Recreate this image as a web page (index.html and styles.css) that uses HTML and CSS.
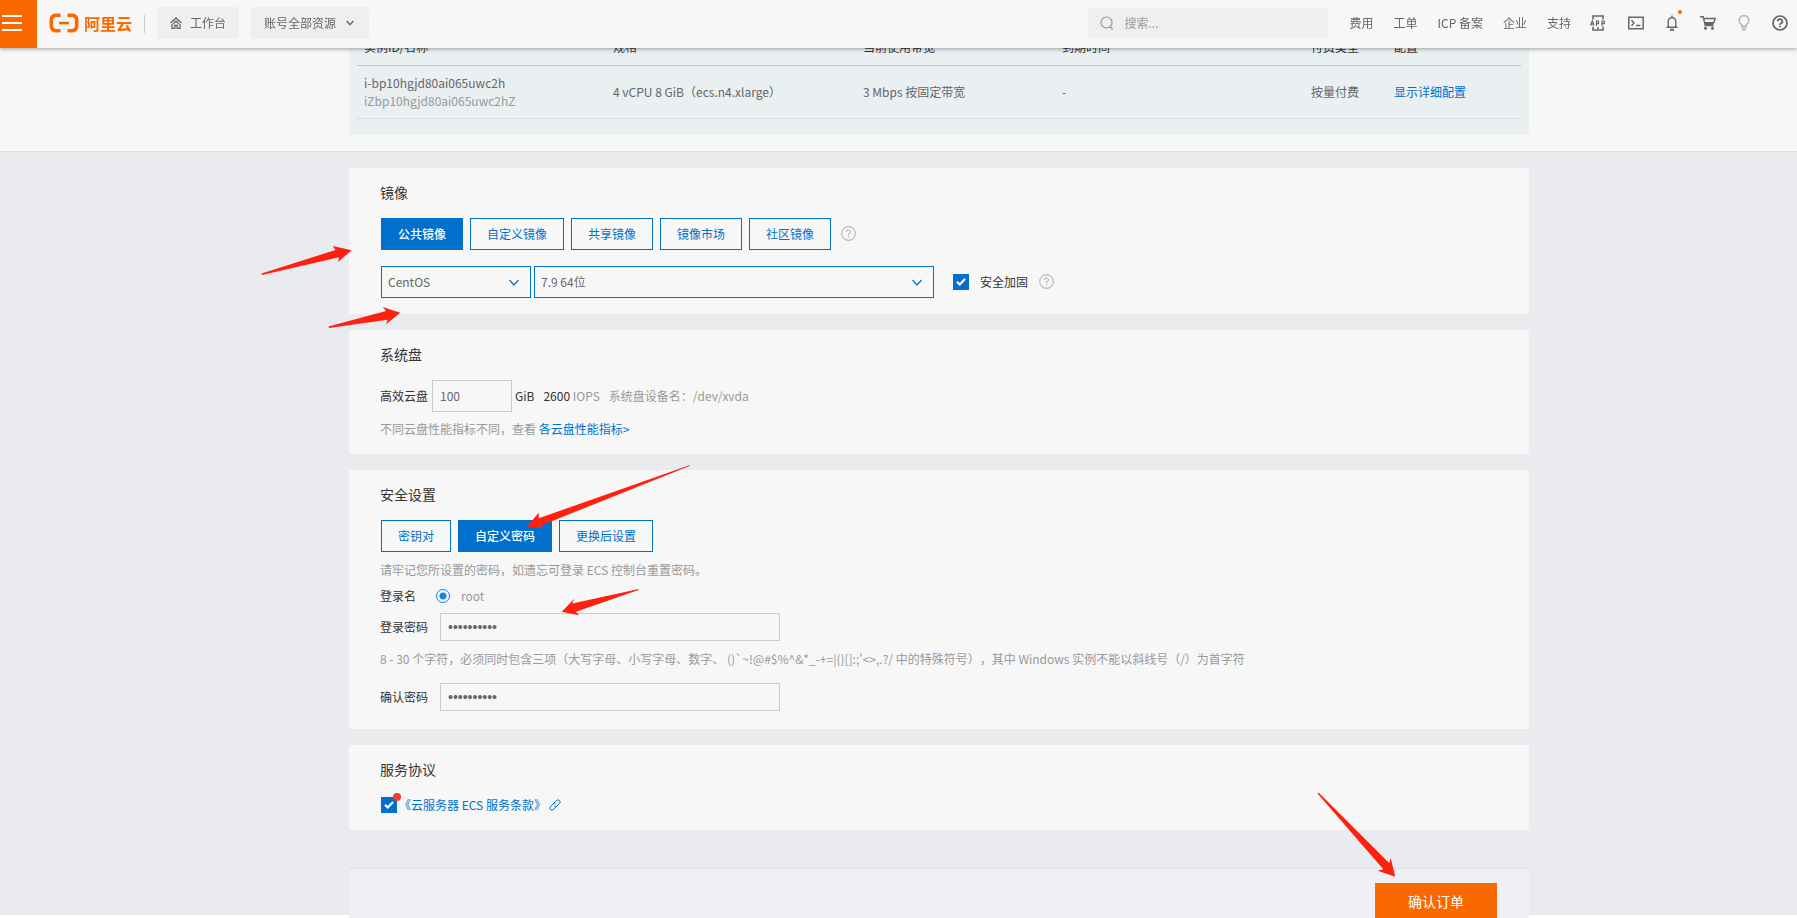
FILE: index.html
```html
<!DOCTYPE html>
<html lang="zh-CN">
<head>
<meta charset="utf-8">
<title>更换操作系统</title>
<link rel="stylesheet" href="styles.css">
</head>
<body>
<header class="topbar">
  <button class="menu" aria-label="菜单"><svg width="20" height="18" viewBox="0 0 20 18" stroke="#fff" stroke-width="2"><path d="M0 1h20M0 8h20M0 15h20"/></svg></button>
  <a class="logo" href="#">
    <svg width="30" height="20" viewBox="0 0 30 20" fill="none" stroke="#f96900" stroke-width="3.6"><path d="M11.500 2.300H6.500Q2.300 3 2.300 7v6Q2.300 17 6.500 17.700H11.500M18.500 2.300H23.500Q27.700 3 27.700 7v6Q27.700 17 23.500 17.700H18.500"/><path d="M10 10h10" stroke-width="2.600"/></svg>
    <span>阿里云</span>
  </a>
  <span class="divider"></span>
  <button class="chip"><svg width="12" height="12" viewBox="0 0 12 12" fill="none" stroke="#666" stroke-width="1.300"><path d="M.5 6 6 1l5.500 5M2 7v4.300h2.800V8.500h2.400v2.800H10V7M3 7 6 4l3 3"/></svg>工作台</button>
  <button class="chip chip-scope">账号全部资源<svg width="8" height="6" viewBox="0 0 8 6" fill="none" stroke="#666" stroke-width="1.400"><path d="m.7 1 3.300 3.600L7.300 1"/></svg></button>
  <div class="search">
    <svg width="14" height="14" viewBox="0 0 14 14" fill="none" stroke="#999" stroke-width="1.200"><circle cx="6.500" cy="6.500" r="5.500"/><path d="m10.200 10.500 2.500 3"/></svg>
    <input type="search" placeholder="搜索..." aria-label="搜索">
  </div>
  <nav class="links">
    <a href="#">费用</a><a href="#">工单</a><a href="#">ICP 备案</a><a href="#">企业</a><a href="#">支持</a>
  </nav>
  <div class="icons">
    <button aria-label="APP"><svg width="16" height="16" viewBox="0 0 16 16" fill="none" stroke="#666" stroke-width="1.500"><path d="M3 4.500V1h10v3.500M3 11.500V15h10v-3.500M7 13h2"/><path d="M.6 10.500 2.300 6 4 10.500M1.200 9.200h2.200M6.500 11V6h2v2.700h-2M12 11V6h2.300v2.700H12" stroke-width="1.200"/></svg></button>
    <button aria-label="Cloud Shell"><svg width="16" height="14" viewBox="0 0 16 14" fill="none" stroke="#666" stroke-width="1.500"><path d="M.8 1.300h14.400v11.400H.8zM3.500 4.300 6 7 3.500 9.700M8 9.500h4.500"/></svg></button>
    <button class="bell" aria-label="消息"><svg width="12" height="16" viewBox="0 0 12 16" fill="none" stroke="#666" stroke-width="1.400"><path d="M6 .5v2M.5 12.300h11M2.200 12V6.500a3.800 3.800 0 0 1 7.600 0V12"/><path d="M4 14.800h4" stroke-width="2"/></svg><i></i></button>
    <button aria-label="购物车"><svg width="16" height="14" viewBox="0 0 16 14"><path d="M0 .8h3.200l2 8.700h8.500M3.500 2.500h11.700l-1.700 5" fill="none" stroke="#666" stroke-width="1.400"/><path d="M4.500 6h9.500l-1 3H5.400z" fill="#666"/><circle cx="5.500" cy="12.300" r="1.500" fill="#666"/><circle cx="12.500" cy="12.300" r="1.500" fill="#666"/></svg></button>
    <button aria-label="提示"><svg width="12" height="16" viewBox="0 0 12 16" fill="none" stroke="#b5bbc2" stroke-width="1.600"><path d="M3.700 11V9.600A4.800 4.800 0 1 1 8.300 9.600V11zM3.500 12.800h5M4 15h4"/></svg></button>
    <button aria-label="帮助"><svg width="16" height="16" viewBox="0 0 16 16" fill="none" stroke="#666" stroke-width="1.700"><circle cx="8" cy="8" r="7"/><path d="M5.600 6.300a2.400 2.200 0 1 1 3.400 2Q8 8.900 8 10M8 11v1.500"/></svg></button>
  </div>
</header>

<section class="order">
  <div class="wrap order-box">
    <table>
      <colgroup><col class="c1"><col class="c2"><col class="c3"><col class="c4"><col class="c5"><col class="c6"></colgroup>
      <thead><tr><th>实例ID/名称</th><th>规格</th><th>当前使用带宽</th><th>到期时间</th><th>付费类型</th><th>配置</th></tr></thead>
      <tbody><tr><td>i-bp10hgjd80ai065uwc2h<br><span class="muted">iZbp10hgjd80ai065uwc2hZ</span></td><td>4 vCPU 8 GiB（ecs.n4.xlarge）</td><td>3 Mbps 按固定带宽</td><td>-</td><td>按量付费</td><td><a href="#">显示详细配置</a></td></tr></tbody>
    </table>
  </div>
</section>

<main>
  <section class="wrap panel">
    <h2>镜像</h2>
    <div class="tabs">
      <button class="tab on">公共镜像</button><button class="tab">自定义镜像</button><button class="tab">共享镜像</button><button class="tab">镜像市场</button><button class="tab">社区镜像</button>
      <svg class="help" width="15" height="15" viewBox="0 0 15 15" fill="none" stroke="#bbb" stroke-width="1.200"><circle cx="7.500" cy="7.500" r="6.800"/><path d="M5.500 6a2 1.900 0 1 1 2.900 1.600Q7.500 8.200 7.500 9.200M7.500 10.200v1.300"/></svg>
    </div>
    <div class="pickers">
      <span class="select os"><select aria-label="操作系统"><option>CentOS</option></select><svg width="10" height="7" viewBox="0 0 10 7" fill="none" stroke="#0070cc" stroke-width="1.200"><path d="m.5 1 4.500 5 4.500-5"/></svg></span>
      <span class="select version"><select aria-label="版本"><option>7.9 64位</option></select><svg width="10" height="7" viewBox="0 0 10 7" fill="none" stroke="#0070cc" stroke-width="1.200"><path d="m.5 1 4.500 5 4.500-5"/></svg></span>
      <label class="harden"><span class="check"><input type="checkbox" checked><svg width="10" height="8" viewBox="0 0 10 8" fill="none" stroke="#fff" stroke-width="2.200"><path d="m1 3.800 2.700 2.700L9 1"/></svg></span>安全加固</label>
      <svg class="help" width="15" height="15" viewBox="0 0 15 15" fill="none" stroke="#bbb" stroke-width="1.200"><circle cx="7.500" cy="7.500" r="6.800"/><path d="M5.500 6a2 1.900 0 1 1 2.900 1.600Q7.500 8.200 7.500 9.200M7.500 10.200v1.300"/></svg>
    </div>
  </section>

  <section class="wrap panel">
    <h2>系统盘</h2>
    <div class="disk">
      <label for="size">高效云盘</label><input id="size" class="field" type="text" value="100"><span>GiB</span>
      <span class="iops">2600 <span class="muted">IOPS</span></span><span class="muted">系统盘设备名：/dev/xvda</span>
    </div>
    <p class="note">不同云盘性能指标不同，查看 <a href="#">各云盘性能指标&gt;</a></p>
  </section>

  <section class="wrap panel security">
    <h2>安全设置</h2>
    <div class="tabs"><button class="tab">密钥对</button><button class="tab on">自定义密码</button><button class="tab">更换后设置</button></div>
    <p class="note tabs-note">请牢记您所设置的密码，如遗忘可登录 ECS 控制台重置密码。</p>
    <div class="row login"><span class="name">登录名</span><label><input type="radio" checked>root</label></div>
    <div class="row"><label class="name" for="pw">登录密码</label><input id="pw" class="field" type="password" value="Abcd123456"></div>
    <p class="note rule">8 - 30 个字符，必须同时包含三项（大写字母、小写字母、数字、 ()`~!@#$%^&amp;*_-+=|{}[]:;'&lt;&gt;,.?/ 中的特殊符号），其中 Windows 实例不能以斜线号（/）为首字符</p>
    <div class="row"><label class="name" for="pw2">确认密码</label><input id="pw2" class="field" type="password" value="Abcd123456"></div>
  </section>

  <section class="wrap panel">
    <h2>服务协议</h2>
    <div class="terms">
      <span class="check"><input type="checkbox" checked aria-label="同意服务条款"><svg width="10" height="8" viewBox="0 0 10 8" fill="none" stroke="#fff" stroke-width="2.200"><path d="m1 3.800 2.700 2.700L9 1"/></svg><i class="dot"></i></span>
      <a href="#">《云服务器 ECS 服务条款》<svg width="12" height="12" viewBox="0 0 12 12" fill="none" stroke="#0070cc"><path d="M5 4 7.500 1.500Q9 .2 10.500 1.500T10.500 4.500L8 7Q6.500 8.200 5.200 7M7 8 4.500 10.500Q3 11.800 1.500 10.500T1.500 7.500L4 5Q5.500 3.800 6.800 5"/></svg></a>
    </div>
  </section>
</main>

<footer class="bar"><div class="wrap bar-box"><button class="submit">确认订单</button></div></footer>

<svg class="arrows" width="1797" height="918" viewBox="0 0 1797 918" fill="#ff2010">
  <path d="M262 275 261.500 273.500 335.500 250 332.700 246 351.700 250.300 338 262 339 257.300Z"/>
  <path d="M329 328 328.500 326.500 386 311 382.700 307 400.300 312.700 386 324.300 387.500 319.800Z"/>
  <path d="M690 465 689.500 466 551 521.500 541.500 525 543.300 528.300 526.700 527 538.700 512.700 538.700 518.300Z"/>
  <path d="M638.700 589 638.500 590 576 611.700 579 615.300 561.700 611.700 574.300 598.700 572.300 603.500Z"/>
  <path d="M1318.500 792.500 1317.500 793.500 1383.300 869.300 1377.700 870.700 1395.300 876.700 1390.700 858 1389.300 863.300Z"/>
</svg>
</body>
</html>
```
FILE: styles.css
```css
* { box-sizing: border-box; }
body {
  margin: 0;
  background: #fff;
  color: #333;
  font: 12px/18px "Noto Sans CJK SC", sans-serif;
  text-spacing-trim: space-all;
}
button, input, select { font: inherit; color: inherit; margin: 0; }
button { border: 0; padding: 0; background: none; cursor: pointer; }
a { color: #0070cc; text-decoration: none; }
svg { display: block; flex: none; }
h2, p { margin: 0; font-weight: 400; }
.muted { color: #999; }
.wrap { max-width: 1180px; margin: 0 auto; }

/* top bar */
.topbar {
  position: fixed; top: 0; left: 0; right: 0; z-index: 2;
  display: flex; align-items: center;
  height: 48px; padding-right: 9px;
  background: #f7f7f7; color: #666;
  box-shadow: 0 1px 4px rgba(0, 0, 0, .35);
}
.menu { width: 37px; height: 48px; padding: 0 0 0 2px; background: #f96900; }
.logo { display: flex; align-items: center; gap: 5px; height: 48px; margin-left: 12px; padding-bottom: 2px; color: #f96900; font-size: 16px; font-weight: 700; line-height: 20px; }
.divider { width: 1px; height: 18px; margin: 0 12px; background: #ccc; }
.chip { display: flex; align-items: center; gap: 8px; height: 32px; margin-bottom: 2px; padding: 0 13px; background: #eeeff1; border-radius: 2px; }
.chip-scope { gap: 10px; margin-left: 12px; padding-right: 15px; }
.search { display: flex; align-items: center; gap: 10px; width: 240px; height: 30px; margin: 0 0 2px auto; padding-left: 12px; background: #eeeff1; }
.search input { flex: 1; min-width: 0; padding: 0; border: 0; outline: 0; background: none; }
.search input::placeholder { color: #999; opacity: 1; }
.links { display: flex; gap: 20px; margin: 0 0 2px 21px; }
.links a { color: #666; }
.icons { display: flex; align-items: center; gap: 22px; margin: 0 0 2px 19px; }
.bell { position: relative; }
.bell i { position: absolute; top: -5px; right: -4px; width: 4px; height: 4px; border-radius: 2px; background: #f96900; }

/* order table */
.order { padding: 0 0 16px 81px; background: #f7f7f7; border-bottom: 1px solid #ddd; }
.order-box { padding: 30px 8px 16px; background: #eaeff2; }
table { width: 100%; table-layout: fixed; border-collapse: collapse; }
th, td { padding: 0 0 0 7px; text-align: left; font-weight: 400; }
th { height: 35px; border-bottom: 1px solid #c0c4c8; }
td { height: 53px; border-bottom: 1px solid #ddd; color: #666; }
.c1 { width: 249px; } .c2 { width: 250px; } .c3 { width: 199px; } .c4 { width: 249px; } .c5 { width: 83px; }

/* panels */
main { padding: 16px 0 85px 81px; background: #e9ebef; }
.panel { padding: 16px 32px; margin-bottom: 16px; background: #f7f7f7; border-radius: 2px; }
.panel:last-child { margin-bottom: 0; }
h2 { margin: 0 0 17px -1px; font-size: 14px; line-height: 17px; }
.tabs { display: flex; align-items: center; gap: 7px; }
.tab { height: 32px; padding: 0 16px; border: 1px solid #0070cc; color: #0070cc; line-height: 16px; }
.tab.on { background: #0070cc; color: #fff; font-weight: 500; }
.tabs .help { margin-left: 3px; }
.pickers { display: flex; align-items: center; gap: 3px; margin-top: 16px; }
.select { position: relative; }
.select select { width: 100%; height: 32px; padding: 0 6px; border: 1px solid #0070cc; border-radius: 0; background: none; color: #666; appearance: none; }
.select svg { position: absolute; right: 12px; top: 13px; pointer-events: none; }
.os { width: 150px; }
.version { width: 400px; }
.harden { display: flex; align-items: center; gap: 11px; margin-left: 16px; }
.pickers .help { margin-left: 8px; }
.check { position: relative; display: block; width: 16px; height: 16px; }
.check input { display: block; width: 16px; height: 16px; appearance: none; background: #0070cc; }
.check svg { position: absolute; left: 3px; top: 4px; pointer-events: none; }
.dot { position: absolute; left: 12px; top: -4px; width: 8px; height: 8px; border-radius: 4px; background: #ee3b30; }

.field { height: 28px; padding: 0 7px; border: 1px solid #ccc; background: none; color: #666; outline: 0; }
.field[type="password"] { font: 14px "Liberation Sans", sans-serif; }
.disk { display: flex; align-items: center; gap: 3px; margin: 0 0 8px -1px; }
.disk label { width: 49px; }
.disk .field { width: 80px; height: 32px; }
.iops { margin: 0 6px; }
.note { margin-left: -1px; color: #999; }
.tabs-note { margin-top: 9px; }
.row { display: flex; align-items: center; margin-left: -1px; }
.row .name { width: 60px; }
.row .field { width: 340px; }
.login { margin: 8px 0 8px -1px; }
.login label { display: flex; align-items: center; gap: 11px; margin-left: -4px; color: #999; }
.login input { width: 14px; height: 14px; appearance: none; border: 1px solid #1584e0; border-radius: 7px; background: radial-gradient(circle, #1584e0 3px, transparent 4px); }
.rule { margin: 9px 0 15px -1px; }
.security { padding-bottom: 18px; }
.terms { display: flex; align-items: center; gap: 2px; padding-top: 1px; }
.terms a { display: flex; align-items: center; gap: 3px; }

/* submit bar */
.bar { position: fixed; left: 0; right: 0; bottom: 0; padding-left: 81px; pointer-events: none; }
.bar-box { display: flex; justify-content: flex-end; padding: 14px 32px 0; border-top: 1px solid #e0e1e4; background: #eff0f3; pointer-events: auto; }
.submit { width: 122px; height: 35px; background: #f96900; color: #fff; font-size: 14px; }

/* pointers drawn over the page */
.arrows { position: absolute; left: 0; top: 0; z-index: 3; pointer-events: none; }
```
